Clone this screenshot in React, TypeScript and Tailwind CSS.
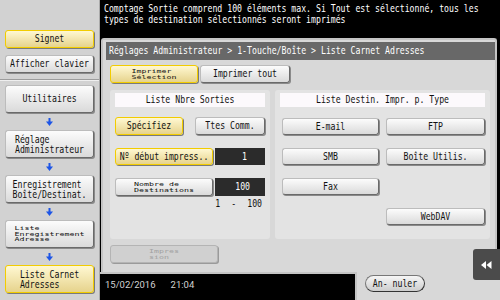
import React from 'react';

const mono = "font-['DejaVu_Sans_Mono','Liberation_Mono',monospace]";

// tall condensed text, like the panel's bitmap font
const T: React.FC<{ children: React.ReactNode; className?: string }> = ({ children, className = '' }) => (
    <span className={`inline-block whitespace-pre text-[8.2px] leading-[7.4px] scale-y-[1.35] ${className}`}>{children}</span>
);

// squashed two/three line labels
const Tiny: React.FC<{ children: React.ReactNode; className?: string; lh?: string }> = ({ children, className = '', lh = 'leading-[10px]' }) => (
    <span className={`inline-block whitespace-pre text-left text-[8.3px] ${lh} scale-y-[0.6] ${className}`}>{children}</span>
);

const whiteBtn =
    'border border-[#bcbcbc] border-r-[#6a6a6a] border-b-[#6a6a6a] bg-linear-to-b from-[#fcfcfc] to-[#dadada] shadow-[1px_1px_0_#8a8a8a]';
const yellowBtn =
    'border border-[#f2cc00] bg-linear-to-b from-[#fff8d2] to-[#e6d38c] shadow-[1px_1px_0_#7a7a7a]';

const Btn: React.FC<{ yellow?: boolean; className?: string; children: React.ReactNode }> = ({ yellow, className = '', children }) => (
    <div className={`flex items-center justify-center rounded-[3px] text-[#111] ${yellow ? yellowBtn : whiteBtn} ${className}`}>
        {children}
    </div>
);

const Arrow: React.FC = () => (
    <div className="flex h-[17px] items-center justify-center">
        <svg width="7" height="8" viewBox="0 0 7 8">
            <rect x="2.5" y="0" width="2" height="4" fill="#1d55e6" />
            <polygon points="0,3.5 7,3.5 3.5,8" fill="#1d55e6" />
        </svg>
    </div>
);

const App: React.FC = () => {
    return (
        <div className={`relative flex h-[300px] w-[500px] overflow-hidden bg-black text-[8.2px] leading-[10px] ${mono}`}>
            {/* Sidebar */}
            <div className="flex w-[100px] flex-col bg-[#d2d2d2] px-[5px] pt-[30px] border-r border-r-[#a9a9a9]">
                <Btn yellow className="h-[18px]"><T>Signet</T></Btn>
                <Btn className="mt-[7px] h-[18px]"><T>Afficher clavier</T></Btn>
                <div className="-mx-[5px] mt-[6px] h-[2px] border-t border-t-[#9c9c9c] border-b border-b-[#efefef]" />
                <Btn className="mt-[4px] h-[28px]"><T>Utilitaires</T></Btn>
                <Arrow />
                <Btn className="h-[28px]">
                    <div className="text-left leading-[10px]">
                        <T>Réglage</T>
                        <br />
                        <T>Administrateur</T>
                    </div>
                </Btn>
                <Arrow />
                <Btn className="h-[28px]">
                    <div className="text-left leading-[10px]">
                        <T>Enregistrement</T>
                        <br />
                        <T>Boîte/Destinat.</T>
                    </div>
                </Btn>
                <Arrow />
                <Btn className="h-[28px]">
                    <Tiny lh="leading-[8.5px]">{'Liste\nEnregistrement\nAdresse'}</Tiny>
                </Btn>
                <Arrow />
                <Btn yellow className="h-[28px]">
                    <div className="text-left leading-[10px]">
                        <T>Liste Carnet</T>
                        <br />
                        <T>Adresses</T>
                    </div>
                </Btn>
            </div>

            {/* Main column */}
            <div className="flex w-[400px] flex-col">
                <div className="h-[37px] bg-black pl-[4px] pt-[3px] text-white leading-[10.5px]">
                    <T>Comptage Sortie comprend 100 éléments max. Si Tout est sélectionné, tous les</T>
                    <br />
                    <T>types de destination sélectionnés seront imprimés</T>
                </div>

                <div className="ml-[1px] mr-[3px] mt-[1px] flex h-[234px] flex-col rounded-t-[3px] border-2 border-b-0 border-[#c4c4c4] bg-[#d8d8d8]">
                    <div className="ml-[3px] mt-[2px] flex h-[18px] w-[389px] items-center bg-[#686868] pl-[3px] text-white">
                        <T>Réglages Administrateur &gt; 1-Touche/Boîte &gt; Liste Carnet Adresses</T>
                    </div>

                    <div className="ml-[7px] mt-[5px] flex gap-[2px]">
                        <Btn yellow className="h-[18px] w-[88px]">
                            <Tiny className="text-center">{'Imprimer\nSélection'}</Tiny>
                        </Btn>
                        <Btn className="h-[18px] w-[90px]"><T>Imprimer tout</T></Btn>
                    </div>

                    <div className="ml-[7px] mt-[7px] flex h-[149px] gap-[5px]">
                        {/* Liste Nbre Sorties */}
                        <div className="flex w-[160px] flex-col rounded-[3px] bg-[#e3e3e3] px-[5px] pt-[3px]">
                            <div className="flex h-[14px] items-center justify-center bg-[#fcf9fc] text-[#111]">
                                <T>Liste Nbre Sorties</T>
                            </div>
                            <div className="mt-[10px] flex justify-between">
                                <Btn yellow className="h-[18px] w-[68px]"><T>Spécifiez</T></Btn>
                                <Btn className="h-[18px] w-[70px]"><T>Ttes Comm.</T></Btn>
                            </div>
                            <div className="mt-[13px] flex gap-[2px]">
                                <Btn yellow className="h-[17px] w-[98px]"><T>Nº début impress..</T></Btn>
                                <div className="flex h-[17px] w-[50px] items-center justify-end bg-[#2b2b2b] pr-[18px] text-white">
                                    <T>1</T>
                                </div>
                            </div>
                            <div className="mt-[13px] flex gap-[2px]">
                                <Btn className="h-[18px] w-[98px]">
                                    <Tiny>{'Nombre de\nDestinations'}</Tiny>
                                </Btn>
                                <div className="flex h-[18px] w-[50px] items-center justify-end bg-[#2b2b2b] pr-[15px] text-white">
                                    <T>100</T>
                                </div>
                            </div>
                            <div className="mt-[4px] flex justify-end gap-[11px] pr-[3px] text-[#111]">
                                <T>1</T>
                                <T>-</T>
                                <T>100</T>
                            </div>
                        </div>

                        {/* Liste Destin. Impr. p. Type */}
                        <div className="flex w-[215px] flex-col rounded-[3px] bg-[#e3e3e3] px-[5px] pt-[3px]">
                            <div className="flex h-[14px] items-center justify-center bg-[#fcf9fc] text-[#111]">
                                <T>Liste Destin. Impr. p. Type</T>
                            </div>
                            <div className="ml-[2px] mt-[11px] grid grid-cols-[97px_99px] gap-x-[7px] gap-y-[13px]">
                                <Btn className="h-[17px]"><T>E-mail</T></Btn>
                                <Btn className="h-[17px]"><T>FTP</T></Btn>
                                <Btn className="h-[17px]"><T>SMB</T></Btn>
                                <Btn className="h-[17px]"><T>Boîte Utilis.</T></Btn>
                                <Btn className="h-[17px]"><T>Fax</T></Btn>
                                <div />
                                <div />
                                <Btn className="h-[17px]"><T>WebDAV</T></Btn>
                            </div>
                        </div>
                    </div>

                    <div className="ml-[7px] mt-[6px] flex h-[18px] w-[108px] items-center justify-center rounded-[3px] border border-[#b4b4b4] bg-[#d0d0d0] shadow-[1px_1px_0_#9a9a9a] text-[#a2a2a2]">
                        <Tiny className="text-center">{'Impres\nsion'}</Tiny>
                    </div>
                </div>

                <div className="flex h-[28px]">
                    <div className="w-[255px] border-t-2 border-t-[#c4c4c4] bg-black pl-[5px] pt-[5px] font-['Roboto',sans-serif] text-[9.5px] leading-[12px] text-[#d2d2d2]">
                        15/02/2016<span className="ml-[15px]">21:04</span>
                    </div>
                    <div className="flex-1 border-l-2 border-l-[#c4c4c4] bg-[#d8d8d8] pl-[8px] pt-[3px]">
                        <div className="flex h-[17px] w-[60px] items-center justify-center rounded-full border border-[#777] border-r-[#333] border-b-[#333] bg-linear-to-b from-[#f6f6f6] to-[#cdcdcd] text-[#111]">
                            <T>An- nuler</T>
                        </div>
                    </div>
                </div>
            </div>

            {/* Rewind tab over the panel edge */}
            <div className="absolute right-0 top-[249px] flex h-[31px] w-[27px] items-center justify-center rounded-l-[3px] bg-[#4b4b4b]">
                <svg width="11" height="8" viewBox="0 0 11 8">
                    <polygon points="5,0 5,8 0,4" fill="#fff" />
                    <polygon points="10.5,0 10.5,8 5.5,4" fill="#fff" />
                </svg>
            </div>
        </div>
    );
};

export default App;
